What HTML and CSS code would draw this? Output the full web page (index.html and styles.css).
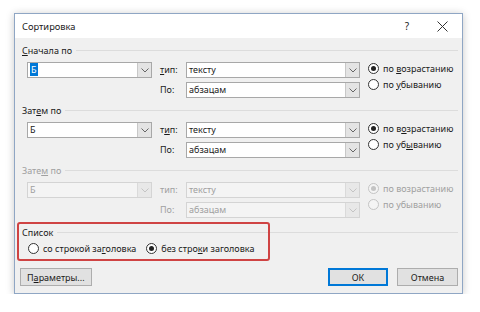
FILE: index.html
```html
<!DOCTYPE html>
<html lang="ru">
<head>
<meta charset="utf-8">
<title>Сортировка</title>
<link rel="stylesheet" href="styles.css">
</head>
<body>
<div class="dialog">
  <div class="titlebar">
    <span class="title">Сортировка</span>
    <span class="help">?</span>
    <span class="close"><svg width="11" height="11" viewBox="0 0 11 11"><path d="M0.5 0.5L10.5 10.5M10.5 0.5L0.5 10.5" stroke="#333" stroke-width="1" fill="none"/></svg></span>
  </div>
  <div class="body">
    <section class="group">
      <div class="group-head"><span><u>С</u>начала по</span><i class="rule"></i></div>
      <div class="grid">
        <div class="combo key"><span class="val"><span class="hl">Б</span></span><span class="btn"><svg width="8" height="5" viewBox="0 0 8 5"><path d="M0.5 0.5L4 4L7.5 0.5" stroke="#666" fill="none"/></svg></span></div>
        <span class="lbl r1"><u>т</u>ип:</span>
        <div class="combo t1"><span class="val">тексту</span><span class="btn"><svg width="8" height="5" viewBox="0 0 8 5"><path d="M0.5 0.5L4 4L7.5 0.5" stroke="#666" fill="none"/></svg></span></div>
        <span class="lbl r2">По:</span>
        <div class="combo t2"><span class="val">абзацам</span><span class="btn"><svg width="8" height="5" viewBox="0 0 8 5"><path d="M0.5 0.5L4 4L7.5 0.5" stroke="#666" fill="none"/></svg></span></div>
        <div class="radios">
          <div class="radio on"><i></i><span>по <u>в</u>озрастанию</span></div>
          <div class="radio"><i></i><span>по <u>у</u>быванию</span></div>
        </div>
      </div>
    </section>
    <section class="group">
      <div class="group-head"><span>Зат<u>е</u>м по</span><i class="rule"></i></div>
      <div class="grid">
        <div class="combo key"><span class="val">Б</span><span class="btn"><svg width="8" height="5" viewBox="0 0 8 5"><path d="M0.5 0.5L4 4L7.5 0.5" stroke="#666" fill="none"/></svg></span></div>
        <span class="lbl r1">т<u>и</u>п:</span>
        <div class="combo t1"><span class="val">тексту</span><span class="btn"><svg width="8" height="5" viewBox="0 0 8 5"><path d="M0.5 0.5L4 4L7.5 0.5" stroke="#666" fill="none"/></svg></span></div>
        <span class="lbl r2">По:</span>
        <div class="combo t2"><span class="val">абзацам</span><span class="btn"><svg width="8" height="5" viewBox="0 0 8 5"><path d="M0.5 0.5L4 4L7.5 0.5" stroke="#666" fill="none"/></svg></span></div>
        <div class="radios">
          <div class="radio on"><i></i><span>по в<u>о</u>зрастанию</span></div>
          <div class="radio"><i></i><span>по уб<u>ы</u>ванию</span></div>
        </div>
      </div>
    </section>
    <section class="group disabled">
      <div class="group-head"><span>Зате<u>м</u> по</span><i class="rule"></i></div>
      <div class="grid">
        <div class="combo key"><span class="val">Б</span><span class="btn"><svg width="8" height="5" viewBox="0 0 8 5"><path d="M0.5 0.5L4 4L7.5 0.5" stroke="#c4c4c4" fill="none"/></svg></span></div>
        <span class="lbl r1">тип:</span>
        <div class="combo t1"><span class="val">тексту</span><span class="btn"><svg width="8" height="5" viewBox="0 0 8 5"><path d="M0.5 0.5L4 4L7.5 0.5" stroke="#c4c4c4" fill="none"/></svg></span></div>
        <span class="lbl r2">По:</span>
        <div class="combo t2"><span class="val">абзацам</span><span class="btn"><svg width="8" height="5" viewBox="0 0 8 5"><path d="M0.5 0.5L4 4L7.5 0.5" stroke="#c4c4c4" fill="none"/></svg></span></div>
        <div class="radios">
          <div class="radio on"><i></i><span>по возрастанию</span></div>
          <div class="radio"><i></i><span>по убыванию</span></div>
        </div>
      </div>
    </section>
    <section class="list-group">
      <div class="group-head"><span>Список</span><i class="rule"></i></div>
      <div class="list-row">
        <div class="radio"><i></i><span>со строкой за<u>г</u>оловка</span></div>
        <div class="radio on"><i></i><span>без стро<u>к</u>и заголовка</span></div>
      </div>
      <div class="mark"></div>
    </section>
    <div class="buttons">
      <button class="btn-std">П<u>а</u>раметры...</button>
      <span class="spacer"></span>
      <button class="btn-std default">ОК</button>
      <button class="btn-std">Отмена</button>
    </div>
  </div>
</div>
</body>
</html>
```

FILE: styles.css
```css
* { box-sizing: border-box; }
html, body { margin: 0; padding: 0; background: #fff; }
body {
  padding: 13px 0 0 14px;
  font-family: "Noto Sans", "Open Sans", sans-serif;
  font-size: 9px;
  color: #1a1a1a;
  white-space: nowrap;
}
u { text-decoration: underline; text-underline-offset: 1px; }
.dialog {
  width: 449px;
  height: 281px;
  border: 1px solid #8fa6c4;
  background: #f0f0f0;
  box-shadow: 0 1px 8px rgba(0,0,0,0.22);
  display: flex;
  flex-direction: column;
}
.titlebar {
  height: 24px;
  background: #fff;
  display: flex;
  align-items: center;
  padding-left: 7px;
}
.title { font-size: 9.3px; flex: 1; padding-top: 1px; }
.help { width: 12px; text-align: center; margin-right: 24px; font-size: 10px; }
.close { width: 11px; height: 11px; margin-right: 14px; display: flex; }
.body {
  flex: 1;
  padding: 5px 4px 0 7px;
  display: flex;
  flex-direction: column;
}
.group { margin-bottom: 5px; }
.group-head {
  height: 14px;
  display: flex;
  align-items: center;
}
.group-head .rule {
  flex: 1;
  height: 1px;
  background: #dcdcdc;
  margin-left: 4px;
}
.grid {
  margin: 5px 0 0 5px;
  display: grid;
  grid-template-columns: 125px 18px 174px auto;
  grid-template-rows: 16px 16px;
  column-gap: 8px;
  row-gap: 4px;
}
.combo {
  display: flex;
  background: #fff;
  border: 1px solid #a8a8a8;
  height: 16px;
}
.combo .val {
  flex: 1;
  padding-left: 2px;
  line-height: 14px;
}
.combo .hl { background: #0078d7; color: #fff; padding: 0 1px; }
.combo .btn {
  width: 14px;
  background: #e4e4e4;
  border-left: 1px solid #c8c8c8;
  display: flex;
  align-items: center;
  justify-content: center;
}
.key { grid-column: 1; grid-row: 1; }
.lbl { line-height: 16px; }
.r1 { grid-column: 2; grid-row: 1; }
.r2 { grid-column: 2; grid-row: 2; }
.t1 { grid-column: 3; grid-row: 1; }
.t2 { grid-column: 3; grid-row: 2; }
.radios {
  grid-column: 4;
  grid-row: 1 / 3;
  margin-top: -2px;
  display: flex;
  flex-direction: column;
}
.radio {
  height: 16px;
  display: flex;
  align-items: center;
}
.radio i {
  width: 11px;
  height: 11px;
  border: 1px solid #333;
  border-radius: 50%;
  background: #fff;
  margin-right: 4px;
  position: relative;
  flex: none;
}
.radio.on i::after {
  content: "";
  position: absolute;
  left: 2px;
  top: 2px;
  width: 5px;
  height: 5px;
  border-radius: 50%;
  background: #222;
}
.disabled { color: #a0a0a0; }
.disabled .combo { background: #f4f4f4; border-color: #d4d4d4; }
.disabled .combo .btn { background: #e8e8e8; border-left-color: #dadada; }
.disabled .radio i { border-color: #c4c4c4; background: #f4f4f4; }
.disabled .radio.on i::after { background: #c4c4c4; }
.list-group {
  position: relative;
  margin-top: 2px;
}
.list-row {
  margin: 1px 0 0 6px;
  display: flex;
  gap: 10px;
}
.mark {
  position: absolute;
  left: -5px;
  top: -3px;
  width: 253px;
  height: 39px;
  border: 2px solid #cf4343;
  border-radius: 3px;
}
.buttons {
  margin: 12px 0 0 -2px;
  display: flex;
  gap: 9px;
}
.spacer { flex: 1; }
.btn-std {
  font: inherit;
  color: #1a1a1a;
  height: 18px;
  min-width: 60px;
  padding: 0 6px;
  background: #e1e1e1;
  border: 1px solid #adadad;
}
.btn-std.default { border: 2px solid #0078d7; width: 60px; }
.buttons .btn-std:last-child { width: 61px; }
```
